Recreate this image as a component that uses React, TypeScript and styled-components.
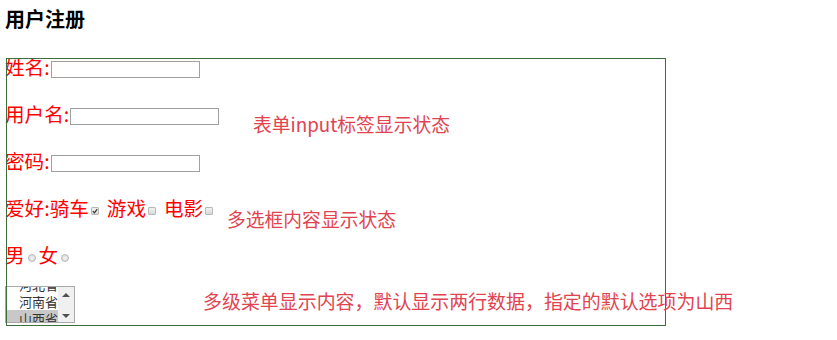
import styled, { createGlobalStyle } from 'styled-components'

const GlobalStyle = createGlobalStyle`
    body {
        margin: 0;
        background: #ffffff;
        font-family: "Noto Sans CJK SC", "Liberation Sans", sans-serif;
    }
`

const provinces = ['河北省', '河南省', '山西省']

const Checkbox = ({ checked }: { checked?: boolean }) => (
    <Box>
        {checked && (
            <svg width="6" height="6" viewBox="0 0 6 6">
                <path d="M0.8 3.2 L2.4 4.8 L5.2 1.2" stroke="#333" strokeWidth="1.2" fill="none" />
            </svg>
        )}
    </Box>
)

export default function App() {
    return (
        <Page>
            <GlobalStyle />
            <Title>用户注册</Title>
            <FormArea>
                <Row>
                    姓名:<TextInput />
                </Row>
                <Row>
                    用户名:<TextInput />
                </Row>
                <Row>
                    密码:<TextInput type="password" />
                </Row>
                <Row>
                    爱好:骑车<Checkbox checked />
                    <Gap />游戏<Checkbox />
                    <Gap />电影<Checkbox />
                </Row>
                <Row>
                    男<Radio />女<Radio />
                </Row>
                <ListBox>
                    <Viewport>
                        <OptionList>
                            {provinces.map(p => (
                                <Option key={p} $selected={p === '山西省'}>
                                    {p}
                                </Option>
                            ))}
                        </OptionList>
                    </Viewport>
                    <ScrollBar>
                        <Arrow $up />
                        <Arrow />
                    </ScrollBar>
                </ListBox>

                <Frame />
                <Note $left={248} $top={57}>表单input标签显示状态</Note>
                <Note $left={222} $top={152}>多选框内容显示状态</Note>
                <Note $left={198} $top={234} $size={18.95}>
                    多级菜单显示内容，默认显示两行数据，指定的默认选项为山西
                </Note>
            </FormArea>
        </Page>
    )
}

const Page = styled.div`
    padding: 7px 5px 0;
    height: 333px;
    overflow: hidden;
`

const Title = styled.h3`
    margin: 0;
    font-size: 20px;
    line-height: 24px;
    font-weight: bold;
    color: #000000;
`

const FormArea = styled.div`
    position: relative;
    margin-top: 25px;
`

const Row = styled.div`
    display: flex;
    align-items: center;
    height: 22px;
    margin-bottom: 25px;
    font-size: 19.6px;
    line-height: 22px;
    color: #ff0000;
`

const TextInput = styled.input`
    box-sizing: border-box;
    width: 149px;
    height: 17px;
    margin: 5px 0 0 1px;
    padding: 0;
    border: 1px solid #a0a0a0;
    background: #ffffff;
    outline: none;
`

const Box = styled.span`
    display: inline-flex;
    align-items: center;
    justify-content: center;
    box-sizing: border-box;
    width: 8px;
    height: 8px;
    margin: 5px 0 0 2px;
    border: 1px solid #b8b8b8;
    border-radius: 1px;
    background: linear-gradient(#f2f2f2, #d8d8d8);
`

const Gap = styled.span`
    display: inline-block;
    width: 8px;
`

const Radio = styled.span`
    display: inline-block;
    box-sizing: border-box;
    width: 8px;
    height: 8px;
    margin: 6px 3px 0 3px;
    border: 1px solid #b8b8b8;
    border-radius: 50%;
    background: radial-gradient(#f4f4f4, #d4d4d4);
`

const ListBox = styled.div`
    display: flex;
    box-sizing: border-box;
    width: 70px;
    height: 37px;
    margin-top: -5px;
    border: 1px solid #a9a9a9;
    background: #ffffff;
`

const Viewport = styled.div`
    flex: 1;
    overflow: hidden;
`

const OptionList = styled.div`
    margin-top: -11px;
`

const Option = styled.div<{ $selected?: boolean }>`
    height: 17px;
    padding-left: 13px;
    font-size: 13px;
    line-height: 17px;
    color: #333333;
    background: ${p => (p.$selected ? '#c8c8c8' : 'transparent')};
`

const ScrollBar = styled.div`
    display: flex;
    flex-direction: column;
    justify-content: space-between;
    align-items: center;
    width: 16px;
    padding: 6px 0 4px;
    background: #f0f0f0;
`

const Arrow = styled.span<{ $up?: boolean }>`
    width: 0;
    height: 0;
    border-left: 4px solid transparent;
    border-right: 4px solid transparent;
    ${p => (p.$up ? 'border-bottom: 4px solid #505050;' : 'border-top: 4px solid #505050;')}
`

const Frame = styled.div`
    position: absolute;
    left: 1px;
    top: 2px;
    width: 660px;
    height: 268px;
    box-sizing: border-box;
    border: 1px solid #3e6e3e;
    pointer-events: none;
`

const Note = styled.div<{ $left: number; $top: number; $size?: number }>`
    position: absolute;
    left: ${p => p.$left}px;
    top: ${p => p.$top}px;
    font-size: ${p => p.$size ?? 18.8}px;
    line-height: 22px;
    white-space: nowrap;
    color: #e2434f;
`
